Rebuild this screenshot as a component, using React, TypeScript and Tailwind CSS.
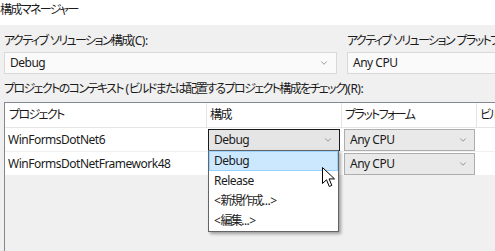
import { ChevronDown } from "lucide-react";

const font = { fontFamily: '"Noto Sans", "Noto Sans CJK JP", sans-serif' };

function Chevron({ className = "" }: { className?: string }) {
  return <ChevronDown size={10} strokeWidth={1.5} className={`text-[#606060] ${className}`} />;
}

// japanese text: a bit tighter than the latin, like Yu Gothic UI
function Jp({ children }: { children: React.ReactNode }) {
  return <span className="tracking-[-1.6px]">{children}</span>;
}

function GridCombo({ value, active }: { value: string; active?: boolean }) {
  return (
    <div
      className={`flex h-[22px] items-center justify-between pl-[5px] pr-[6px] ${
        active ? "border border-[#1a1a1a] bg-[#e5e5e5]" : "border border-[#adadad] bg-[#e9e9e9]"
      }`}
    >
      <span>{value}</span>
      <Chevron />
    </div>
  );
}

export default function App() {
  return (
    <div
      className="relative h-[251px] w-[495px] overflow-hidden bg-[#f0f0f0] text-[12px] tracking-[-0.5px] text-[#1b1b1b] [font-feature-settings:'palt']"
      style={font}
    >
      {/* title */}
      <div className="flex h-[25px] items-start bg-white pt-[1px] leading-[17px]">
        <Jp>構成マネージャー</Jp>
      </div>

      <div className="px-[4px] pt-[8px]">
        {/* active config + platform */}
        <div className="flex gap-[10px]">
          <div className="w-[333px] shrink-0">
            <div className="h-[19px] whitespace-pre leading-[16px]">
              <Jp>アクティブ</Jp> <Jp>ソリューション構成</Jp>(C):
            </div>
            <div className="flex h-[22px] items-center justify-between border border-[#d9d9d9] bg-[#fafafa] pl-[5px] pr-[7px]">
              <span>Debug</span>
              <Chevron />
            </div>
          </div>
          <div className="w-[160px] shrink-0">
            <div className="h-[19px] whitespace-pre leading-[16px]">
              <Jp>アクティブ</Jp> <Jp>ソリューション</Jp> <Jp>プラットフォーム</Jp>(P):
            </div>
            <div className="flex h-[22px] items-center border border-[#d9d9d9] bg-[#fafafa] pl-[5px]">
              <span>Any CPU</span>
            </div>
          </div>
        </div>

        <div className="mt-[7px] h-[21px] whitespace-pre leading-[16px]">
          <Jp>プロジェクトのコンテキスト</Jp> (<Jp>ビルドまたは配置するプロジェクト構成をチェック</Jp>)(R):
        </div>

        {/* grid */}
        <div className="h-[160px] w-[520px] border-l border-t border-[#828790]">
          <div className="grid h-[25px] grid-cols-[202px_135px_135px_60px] border-b border-[#e5e5e5] bg-white leading-[24px]">
            <div className="border-r border-[#e5e5e5] pl-[4px]">
              <Jp>プロジェクト</Jp>
            </div>
            <div className="border-r border-[#e5e5e5] pl-[3px]">
              <Jp>構成</Jp>
            </div>
            <div className="border-r border-[#e5e5e5] pl-[3px]">
              <Jp>プラットフォーム</Jp>
            </div>
            <div className="pl-[3px]">
              <Jp>ビルド</Jp>
            </div>
          </div>
          {[
            { name: "WinFormsDotNet6", active: true },
            { name: "WinFormsDotNetFramework48", active: false },
          ].map((r) => (
            <div
              key={r.name}
              className="grid h-[24px] grid-cols-[202px_135px_135px_60px] items-center border-b border-[#f0f0f0] bg-white"
            >
              <div className="pl-[3px]">{r.name}</div>
              <div className="pl-[1px] pr-[2px]">
                {r.active ? <GridCombo value="Debug" active /> : <div className="h-[22px]" />}
              </div>
              <div className="pl-[2px] pr-[2px]">
                <GridCombo value="Any CPU" />
              </div>
              <div />
            </div>
          ))}
        </div>
      </div>

      {/* open dropdown list */}
      <div className="absolute left-[208px] top-[150px] w-[131px] border border-[#646464] bg-white shadow-[2px_2px_3px_rgba(0,0,0,0.35)]">
        <div className="flex h-[20px] items-center border border-[#99d1ff] bg-[#cce8ff] pl-[4px]">Debug</div>
        <div className="flex h-[20px] items-center pl-[5px]">Release</div>
        <div className="flex h-[20px] items-center pl-[5px]">
          &lt;<Jp>新規作成</Jp>...&gt;
        </div>
        <div className="flex h-[20px] items-center pl-[5px]">
          &lt;<Jp>編集</Jp>...&gt;
        </div>
      </div>

      {/* mouse cursor */}
      <svg className="absolute left-[322px] top-[167px]" width="14" height="22" viewBox="0 0 14 22">
        <path
          d="M0.5 0.5 L0.5 16.5 L4.5 12.8 L7.3 19.5 L9.8 18.4 L7.1 11.9 L12.5 11.9 Z"
          fill="#fff"
          stroke="#000"
          strokeWidth="1"
          strokeLinejoin="miter"
        />
      </svg>
    </div>
  );
}
